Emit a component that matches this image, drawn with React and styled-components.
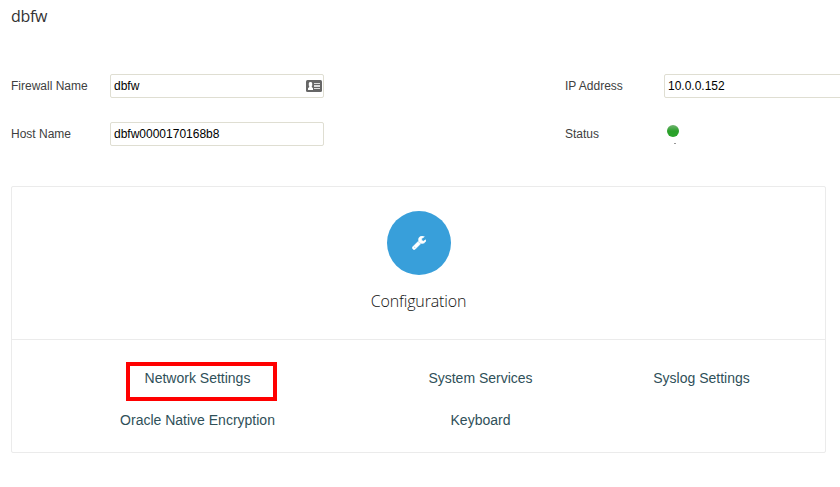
import React from "react";
import styled, { createGlobalStyle } from "styled-components";

const Global = createGlobalStyle`
  *, *::before, *::after { box-sizing: border-box; }
  body { margin: 0; background: #fff; overflow: hidden; font-family: "Liberation Sans", Arial, sans-serif; }
`;

const Page = styled.main`
  width: 840px;
  height: 487px;
  padding-left: 11px;
  overflow: hidden;
`;

const Title = styled.h1`
  height: 32px;
  margin: 0 0 42px;
  font: 400 16px/32px "Open Sans", sans-serif;
  letter-spacing: -0.3px;
  color: #333;
`;

const Form = styled.section`
  display: grid;
  grid-template-columns: 99px 455px 99px 214px;
  grid-auto-rows: 24px;
  row-gap: 24px;
`;

const Label = styled.label`
  font-size: 12px;
  line-height: 24px;
  color: #404040;
  white-space: nowrap;
`;

const Field = styled.div`
  display: flex;
  align-items: center;
  justify-content: space-between;
  width: 214px;
  height: 24px;
  padding: 0 1px 0 3px;
  border: 1px solid #dfded2;
  border-radius: 2px;
  font-size: 12px;
  color: #000;
`;

const Status = styled.div`
  display: flex;
  flex-direction: column;
  padding: 3px 0 0 3px;
`;

const Lamp = styled.span`
  flex: none;
  width: 12px;
  height: 12px;
  border-radius: 50%;
  background: linear-gradient(#72b472, #2ba02b 50%, #2aa52a);
`;

const Tick = styled.span`
  flex: none;
  width: 2px;
  height: 1px;
  margin: 6px 0 0 7px;
  background: #999;
`;

const Panel = styled.section`
  width: 815px;
  height: 267px;
  margin-top: 40px;
  border: 1px solid #ebebeb;
  border-radius: 2px;
`;

const PanelHead = styled.header`
  display: flex;
  flex-direction: column;
  align-items: center;
  height: 153px;
  padding-top: 24px;
  border-bottom: 1px solid #ebebeb;
`;

const Disc = styled.div`
  display: grid;
  place-items: center;
  width: 64px;
  height: 64px;
  border-radius: 50%;
  background: #389fda;
`;

const PanelTitle = styled.h2`
  margin: 14px 0 0;
  font: 300 16px/24px "Open Sans", sans-serif;
  letter-spacing: -0.15px;
  color: #111;
`;

const Links = styled.nav`
  display: grid;
  grid-template-columns: 371px 195px 247px;
  grid-auto-rows: 42px;
  padding-top: 17px;
`;

const Link = styled.a`
  position: relative;
  text-align: center;
  font-size: 14px;
  line-height: 42px;
  color: #2f5059;
  white-space: nowrap;
`;

const Highlight = styled.span`
  position: absolute;
  left: 114px;
  top: 5px;
  width: 151px;
  height: 39px;
  border: 4px solid #f00;
`;

const CardIcon = () => (
  <svg width="16" height="12" viewBox="0 0 16 12">
    <rect width="16" height="12" rx="1.5" fill="#666" />
    <path fill="#fff" d="M2 10V8.2L3.2 7V5.8H2.8V3.2Q3 2 4.500 2T6.200 3.200V5.800H5.800V7L7 8.200V10Z" />
    <path fill="#ddd" d="M8 3h6v1H8zM8 5h6v2H8zM8 8h6v1H8z" />
  </svg>
);

const WrenchIcon = () => (
  <svg width="14" height="14" viewBox="0 0 1664 1664">
    <path fill="#fff" stroke="#fff" strokeWidth="60" d="M384 1344q0-26-19-45t-45-19-45 19-19 45 19 45 45 19 45-19 19-45zm644-420l-682 682q-37 37-90 37-52 0-91-37l-106-108q-38-36-38-90 0-53 38-91l681-681q39 98 114.500 173.500t173.500 114.500zm634-435q0 39-23 106-47 134-164.500 217.500t-258.500 83.500q-185 0-316.500-131.500t-131.500-316.500 131.500-316.500 316.500-131.500q58 0 121.500 16.500t107.500 46.500q16 11 16 28t-16 28l-293 169v224l193 107q5-3 79-48.500t135.500-81 70.500-35.500q15 0 23.500 10t8.500 25z" />
  </svg>
);

const LINKS = ["Network Settings", "System Services", "Syslog Settings", "Oracle Native Encryption", "Keyboard"];

export default function App() {
  return (
    <Page>
      <Global />
      <Title>dbfw</Title>
      <Form>
        <Label>Firewall Name</Label>
        <Field>dbfw<CardIcon /></Field>
        <Label>IP Address</Label>
        <Field>10.0.0.152</Field>
        <Label>Host Name</Label>
        <Field>dbfw0000170168b8</Field>
        <Label>Status</Label>
        <Status><Lamp /><Tick /></Status>
      </Form>
      <Panel>
        <PanelHead>
          <Disc><WrenchIcon /></Disc>
          <PanelTitle>Configuration</PanelTitle>
        </PanelHead>
        <Links>
          {LINKS.map((name, i) => (
            <Link key={name}>{name}{i === 0 && <Highlight />}</Link>
          ))}
        </Links>
      </Panel>
    </Page>
  );
}
